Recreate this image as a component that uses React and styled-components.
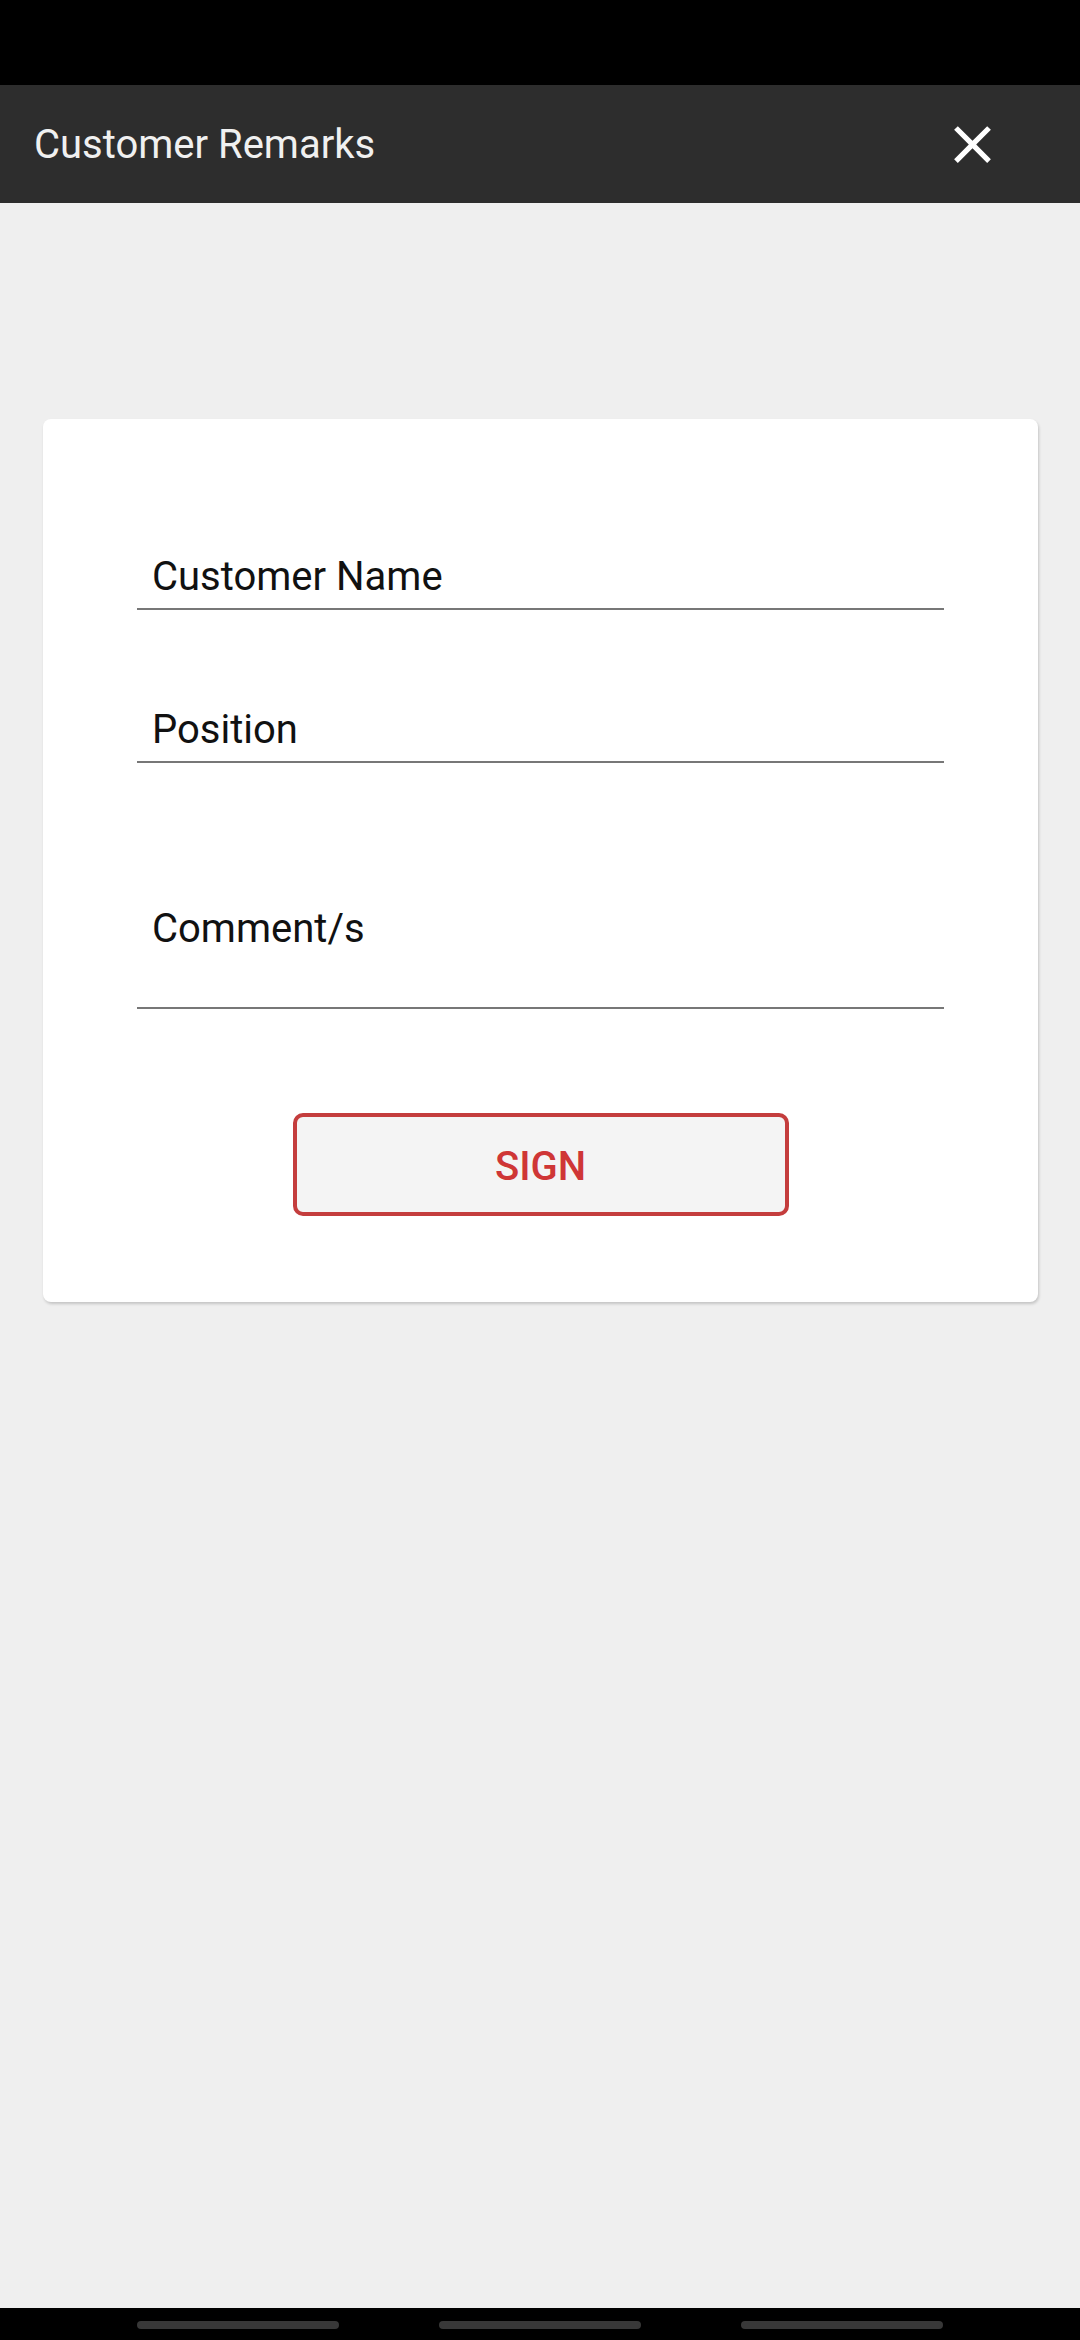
import styled, { createGlobalStyle } from "styled-components";

const GlobalStyle = createGlobalStyle`
  body {
    margin: 0;
    background: #efefef;
    font-family: Roboto, "Liberation Sans", sans-serif;
  }
`;

const fields = [
  { label: "Customer Name", gap: 0 },
  { label: "Position", gap: 95 },
  { label: "Comment/s", gap: 141, multiline: true },
];

const CloseIcon = () => (
  <svg width="63" height="63" viewBox="0 0 24 24">
    <path
      d="M19 6.41 17.59 5 12 10.59 6.41 5 5 6.41 10.59 12 5 17.59 6.41 19 12 13.41 17.59 19 19 17.59 13.41 12z"
      fill="#ffffff"
    />
  </svg>
);

const App = () => {
  return (
    <Screen>
      <GlobalStyle />
      <StatusBar />
      <Toolbar>
        <Title>Customer Remarks</Title>
        <CloseButton aria-label="close">
          <CloseIcon />
        </CloseButton>
      </Toolbar>

      <Content>
        <Card>
          {fields.map((f) => (
            <Field key={f.label} $gap={f.gap} $multiline={f.multiline}>
              {f.label}
            </Field>
          ))}
          <ButtonRow>
            <SignButton>SIGN</SignButton>
          </ButtonRow>
        </Card>
      </Content>

      <NavBar>
        <Pill />
        <Pill />
        <Pill />
      </NavBar>
    </Screen>
  );
};

export default App;

const Screen = styled.div`
  min-height: 2340px;
  display: flex;
  flex-direction: column;
  background: #efefef;
`;

const StatusBar = styled.div`
  height: 85px;
  background: #000;
`;

const Toolbar = styled.header`
  height: 118px;
  background: #2d2d2d;
  display: flex;
  align-items: center;
  justify-content: space-between;
  padding-left: 34px;
`;

const Title = styled.h1`
  margin: 0;
  font-size: 40px;
  font-weight: 400;
  color: #f0f0f0;
`;

const CloseButton = styled.button`
  width: 63px;
  height: 63px;
  padding: 0;
  margin-right: 76px;
  border: none;
  background: transparent;
  display: flex;
  align-items: center;
  justify-content: center;
`;

const Content = styled.main`
  flex: 1;
  padding: 216px 42px 0 43px;
`;

const Card = styled.section`
  background: #fff;
  border-radius: 8px;
  box-shadow: 1px 2px 3px rgba(0, 0, 0, 0.18);
  padding: 133px 94px 86px 94px;
`;

const Field = styled.div`
  margin-top: ${(p) => p.$gap}px;
  padding: 0 15px ${(p) => (p.$multiline ? 53 : 6)}px;
  border-bottom: 2px solid #777;
  font-size: 40px;
  line-height: 50px;
  color: #111;
`;

const ButtonRow = styled.div`
  display: flex;
  justify-content: center;
  margin-top: 104px;
`;

const SignButton = styled.button`
  width: 496px;
  height: 103px;
  padding: 4px 0 0;
  border: 4px solid #c43d3d;
  border-radius: 10px;
  background: #f4f4f4;
  color: #cf3636;
  font-family: Roboto, "Liberation Sans", sans-serif;
  font-size: 40px;
  font-weight: 500;
`;

const NavBar = styled.nav`
  height: 32px;
  background: #000;
  display: flex;
  justify-content: center;
  gap: 100px;
  padding-top: 13px;
  box-sizing: border-box;
`;

const Pill = styled.span`
  width: 202px;
  height: 8px;
  border-radius: 4px;
  background: #383838;
`;
